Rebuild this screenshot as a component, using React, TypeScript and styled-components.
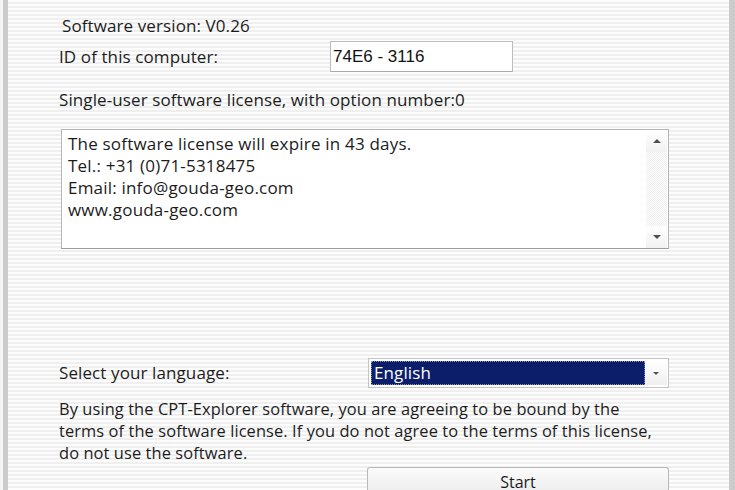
import React from "react";
import styled, { createGlobalStyle } from "styled-components";

const Global = createGlobalStyle`
  html, body { margin: 0; padding: 0; overflow: hidden; background: #fafafa; }
  body { font-family: "Open Sans", Lato, sans-serif; }
`;

const Window = styled.div`
  box-sizing: border-box;
  width: 735px;
  height: 490px;
  border-left: 3px solid #f4f4f4;
  display: flex;
  overflow: hidden;
  background: #f4f4f4;
`;

const Frame = styled.div`
  flex: 1;
  display: flex;
  border-left: 5px solid #cbcbcb;
  border-right: 6px solid #cbcbcb;
  background: repeating-linear-gradient(
    to bottom,
    #fdfdfd 0px,
    #fdfdfd 2px,
    #efefef 2px,
    #efefef 4px
  );
`;

const Content = styled.div`
  flex: 1;
  display: flex;
  flex-direction: column;
  padding: 15px 0 0 51px;
  color: #1c1c1c;
  font-size: 17px;
  letter-spacing: 0.1px;
  line-height: 22px;
  & > * { flex-shrink: 0; }
`;

const Line = styled.div<{ $indent?: number; $gap?: number }>`
  margin-left: ${(p) => p.$indent ?? 0}px;
  margin-top: ${(p) => p.$gap ?? 0}px;
  white-space: nowrap;
`;

const Row = styled.div<{ $gap: number; $h: number }>`
  display: flex;
  align-items: center;
  height: ${(p) => p.$h}px;
  margin-top: ${(p) => p.$gap}px;
`;

const Label = styled.div<{ $w: number }>`
  width: ${(p) => p.$w}px;
  flex-shrink: 0;
  white-space: nowrap;
`;

const IdBox = styled.div`
  box-sizing: border-box;
  width: 183px;
  height: 31px;
  background: #fff;
  border: 1px solid #bdbdbd;
  border-bottom-color: #a8a8a8;
  font-family: "Liberation Sans", Arial, sans-serif;
  font-size: 17px;
  letter-spacing: 0;
  color: #111;
  display: flex;
  align-items: center;
  padding-left: 2px;
`;

const TextArea = styled.div`
  box-sizing: border-box;
  margin: 18px 0 0 2px;
  width: 608px;
  height: 120px;
  background: #fff;
  border: 1px solid #b4b4b4;
  border-bottom-color: #9c9c9c;
  display: flex;
`;

const TextBody = styled.div`
  flex: 1;
  padding: 3px 0 0 6px;
  line-height: 22px;
  letter-spacing: 0.2px;
  white-space: nowrap;
`;

const ScrollBar = styled.div`
  width: 21px;
  margin-right: 1px;
  display: flex;
  flex-direction: column;
  justify-content: space-between;
  background: repeating-conic-gradient(#ffffff 0 25%, #eeeeee 0 50%) 0 0 / 2px 2px;
`;

const ArrowBtn = styled.div`
  height: 22px;
  display: flex;
  align-items: center;
  justify-content: center;
  background: linear-gradient(to bottom, #ffffff, #f1f1f1);
`;

const Tri = styled.div<{ $down?: boolean; $w?: number }>`
  width: 0;
  height: 0;
  border-left: ${(p) => (p.$w ?? 8) / 2}px solid transparent;
  border-right: ${(p) => (p.$w ?? 8) / 2}px solid transparent;
  ${(p) =>
    p.$down
      ? `border-top: ${Math.round((p.$w ?? 8) / 2)}px solid #505050;`
      : `border-bottom: ${Math.round((p.$w ?? 8) / 2)}px solid #505050;`}
`;

const Select = styled.div`
  box-sizing: border-box;
  width: 301px;
  height: 30px;
  background: #fff;
  border: 1px solid #c4c4c4;
  display: flex;
  padding: 2px 1px 2px 2px;
`;

const Selected = styled.div`
  flex: 1;
  background: #0c1e69;
  outline: 1px dotted #8c96c0;
  outline-offset: -1px;
  color: #fff;
  padding-left: 3px;
  display: flex;
  align-items: center;
  line-height: 20px;
`;

const DropBtn = styled.div`
  width: 22px;
  display: flex;
  align-items: center;
  justify-content: center;
  background: linear-gradient(to bottom, #ffffff, #efefef);
`;

const Para = styled.div`
  margin-top: 10px;
  font-size: 16.4px;
  line-height: 22px;
  white-space: nowrap;
`;

const StartButton = styled.button`
  box-sizing: border-box;
  margin: 3px 0 0 308px;
  width: 302px;
  height: 25px;
  border: 1px solid #b9b9b9;
  border-bottom: none;
  border-radius: 3px 3px 0 0;
  background: linear-gradient(to bottom, #fbfbfb, #ededed);
  font-family: "Open Sans", sans-serif;
  font-size: 16px;
  line-height: 18px;
  color: #1c1c1c;
  padding: 5px 0 0 0;
  display: flex;
  justify-content: center;
  align-items: flex-start;
`;

export default function App() {
  return (
    <>
      <Global />
      <Window>
        <Frame>
          <Content>
            <Line $indent={3}>Software version: V0.26</Line>
            <Row $gap={4} $h={31}>
              <Label $w={271}>ID of this computer:</Label>
              <IdBox>74E6 - 3116</IdBox>
            </Row>
            <Line $gap={17}>Single-user software license, with option number:0</Line>
            <TextArea>
              <TextBody>
                The software license will expire in 43 days.
                <br />
                Tel.: +31 (0)71-5318475
                <br />
                Email: info@gouda-geo.com
                <br />
                www.gouda-geo.com
              </TextBody>
              <ScrollBar>
                <ArrowBtn>
                  <Tri $w={8} />
                </ArrowBtn>
                <ArrowBtn>
                  <Tri $down $w={8} />
                </ArrowBtn>
              </ScrollBar>
            </TextArea>
            <Row $gap={109} $h={30}>
              <Label $w={309}>Select your language:</Label>
              <Select>
                <Selected>English</Selected>
                <DropBtn>
                  <Tri $down $w={6} />
                </DropBtn>
              </Select>
            </Row>
            <Para>
              By using the CPT-Explorer software, you are agreeing to be bound by the
              <br />
              terms of the software license. If you do not agree to the terms of this license,
              <br />
              do not use the software.
            </Para>
            <StartButton>Start</StartButton>
          </Content>
        </Frame>
      </Window>
    </>
  );
}
